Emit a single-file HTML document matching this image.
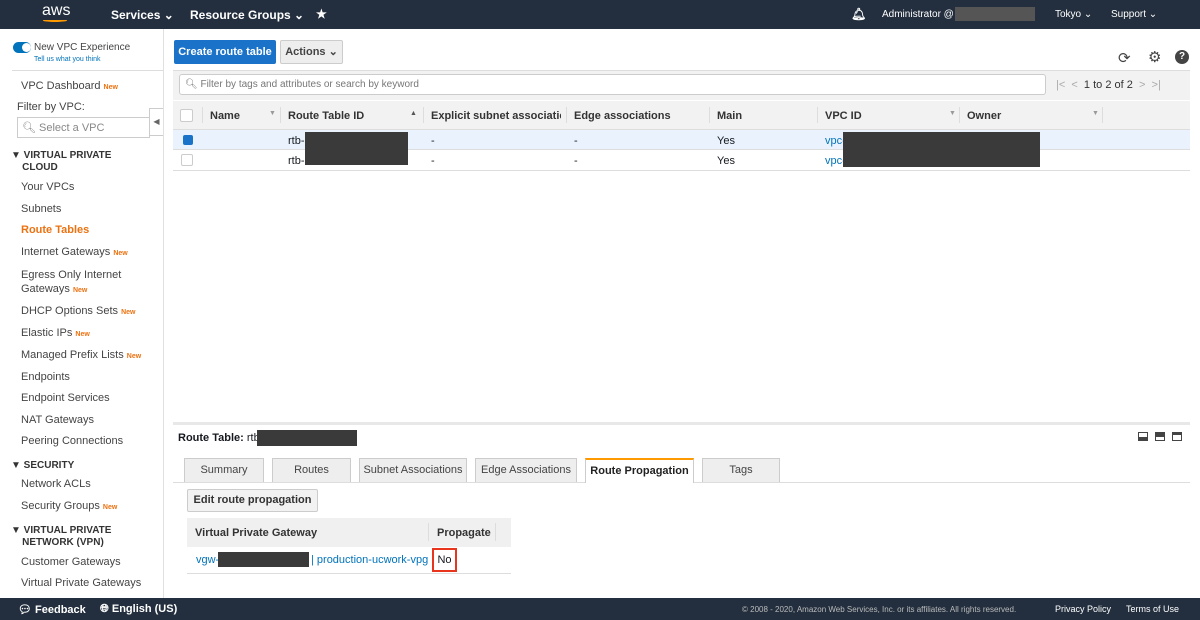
<!DOCTYPE html><html><head><meta charset="utf-8"><style>
*{box-sizing:border-box;margin:0;padding:0}
body{width:1200px;height:620px;overflow:hidden;font-family:"Liberation Sans",Arial,sans-serif;font-size:11px;color:#16191f;background:#fff;position:relative}
.a{position:absolute;white-space:nowrap}
.nav{left:0;top:0;width:1200px;height:29px;background:#232f3e;color:#fff;font-size:12px;font-weight:bold}
.foot{left:0;top:598px;width:1200px;height:22px;background:#232f3e;color:#fff;font-size:11px}
.new{color:#ec7211;font-size:7px;font-weight:bold}
.side{font-size:11px;color:#444}
.blk{background:#3a3a3a}
.hd{font-weight:bold;color:#333}
.sep{top:107px;width:1px;height:16px;background:#ddd}
.tab{top:458px;height:24px;border:1px solid #ccc;border-bottom:none;background:#eee;text-align:center;line-height:23px;font-size:11px;color:#444}
.lnk{color:#0073bb}
</style></head><body>
<div class="a nav">
<div class="a" style="left:42px;top:2px;font-size:16px;font-weight:normal">aws</div>
<div class="a" style="left:43px;top:19px;width:24px;height:3px;border-bottom:2px solid #f90;border-radius:0 0 50% 50%"></div>
<div class="a" style="left:111px;top:8px">Services ⌄</div>
<div class="a" style="left:190px;top:8px">Resource Groups ⌄</div>
<div class="a" style="left:316px;top:7px">★</div>
<div class="a" style="left:851px;top:7px">🔔︎</div>
<div class="a" style="left:882px;top:9px;font-weight:normal;font-size:10px">Administrator @</div>
<div class="a blk" style="left:955px;top:7px;width:80px;height:14px;background:#555"></div>
<div class="a" style="left:1055px;top:9px;font-weight:normal;font-size:10px">Tokyo ⌄</div>
<div class="a" style="left:1111px;top:9px;font-weight:normal;font-size:10px">Support ⌄</div>
</div>
<div class="a" style="left:163px;top:29px;width:1px;height:569px;background:#e0e0e0"></div>
<div class="a" style="left:13px;top:42px;width:18px;height:11px;border-radius:6px;background:#0073bb"></div>
<div class="a" style="left:22px;top:43px;width:9px;height:9px;border-radius:50%;background:#fff"></div>
<div class="a side" style="left:34px;top:42px;font-size:10px">New VPC Experience</div>
<div class="a lnk" style="left:34px;top:56px;font-size:7px">Tell us what you think</div>
<div class="a" style="left:12px;top:70px;width:151px;height:1px;background:#ddd"></div>
<div class="a side" style="left:21px;top:80px">VPC Dashboard <span class="new">New</span></div>
<div class="a side" style="left:17px;top:101px">Filter by VPC:</div>
<div class="a" style="left:17px;top:117px;width:133px;height:21px;border:1px solid #ccc"></div>
<div class="a side" style="left:22px;top:121px;color:#888">🔍︎ Select a VPC</div>
<div class="a" style="left:149px;top:108px;width:14px;height:28px;border:1px solid #ccc;border-right:none;background:#fff;color:#666;font-size:8px;line-height:26px;text-align:center">◀</div>
<div class="a side hd" style="left:11px;top:150px;font-size:10px;line-height:12px">▼ VIRTUAL PRIVATE<br>&nbsp;&nbsp;&nbsp;&nbsp;CLOUD</div>
<div class="a side" style="left:21px;top:181px">Your VPCs</div>
<div class="a side" style="left:21px;top:203px">Subnets</div>
<div class="a side" style="left:21px;top:224px;color:#ec7211;font-weight:bold">Route Tables</div>
<div class="a side" style="left:21px;top:246px">Internet Gateways <span class="new">New</span></div>
<div class="a side" style="left:21px;top:268px;line-height:14px">Egress Only Internet<br>Gateways <span class="new">New</span></div>
<div class="a side" style="left:21px;top:305px">DHCP Options Sets <span class="new">New</span></div>
<div class="a side" style="left:21px;top:327px">Elastic IPs <span class="new">New</span></div>
<div class="a side" style="left:21px;top:349px">Managed Prefix Lists <span class="new">New</span></div>
<div class="a side" style="left:21px;top:371px">Endpoints</div>
<div class="a side" style="left:21px;top:392px">Endpoint Services</div>
<div class="a side" style="left:21px;top:414px">NAT Gateways</div>
<div class="a side" style="left:21px;top:435px">Peering Connections</div>
<div class="a side hd" style="left:11px;top:460px;font-size:10px">▼ SECURITY</div>
<div class="a side" style="left:21px;top:478px">Network ACLs</div>
<div class="a side" style="left:21px;top:500px">Security Groups <span class="new">New</span></div>
<div class="a side hd" style="left:11px;top:525px;font-size:10px;line-height:12px">▼ VIRTUAL PRIVATE<br>&nbsp;&nbsp;&nbsp;&nbsp;NETWORK (VPN)</div>
<div class="a side" style="left:21px;top:556px">Customer Gateways</div>
<div class="a side" style="left:21px;top:577px">Virtual Private Gateways</div>
<div class="a" style="left:174px;top:40px;width:102px;height:24px;background:#1a73c9;border-radius:2px;color:#fff;font-weight:bold;line-height:24px;text-align:center">Create route table</div>
<div class="a" style="left:280px;top:40px;width:63px;height:24px;background:#eee;border:1px solid #ccc;border-radius:2px;font-weight:bold;line-height:22px;text-align:center;color:#444">Actions ⌄</div>
<div class="a" style="left:1118px;top:49px;font-size:15px;color:#444">⟳</div>
<div class="a" style="left:1148px;top:48px;font-size:15px;color:#444">⚙</div>
<div class="a" style="left:1175px;top:50px;width:14px;height:14px;border-radius:50%;background:#444;color:#fff;font-size:10px;font-weight:bold;text-align:center;line-height:14px">?</div>
<div class="a" style="left:173px;top:70px;width:1017px;height:30px;background:#f2f2f2;border-top:1px solid #ddd"></div>
<div class="a" style="left:179px;top:74px;width:867px;height:21px;background:#fff;border:1px solid #ccc;border-radius:3px"></div>
<div class="a" style="left:185px;top:79px;color:#777;font-size:10px">🔍︎ Filter by tags and attributes or search by keyword</div>
<div class="a" style="left:1056px;top:79px;color:#aaa;font-size:11px">|&lt; &nbsp;&lt; <span style="color:#333">&nbsp;1 to 2 of 2&nbsp;</span> &gt; &nbsp;&gt;|</div>
<div class="a" style="left:173px;top:101px;width:1017px;height:29px;background:#f2f2f2;border-bottom:1px solid #ddd"></div>
<div class="a" style="left:180px;top:109px;width:13px;height:13px;border:1px solid #ccc;background:#fff;border-radius:2px"></div>
<div class="a sep" style="left:202px"></div><div class="a sep" style="left:280px"></div><div class="a sep" style="left:423px"></div><div class="a sep" style="left:566px"></div><div class="a sep" style="left:709px"></div><div class="a sep" style="left:817px"></div><div class="a sep" style="left:959px"></div><div class="a sep" style="left:1102px"></div>
<div class="a hd" style="left:210px;top:110px">Name</div><div class="a" style="left:269px;top:110px;color:#999;font-size:7px">▼</div>
<div class="a hd" style="left:288px;top:110px">Route Table ID</div><div class="a" style="left:410px;top:110px;color:#555;font-size:7px">▲</div>
<div class="a hd" style="left:431px;top:110px;width:130px;overflow:hidden">Explicit subnet association</div>
<div class="a hd" style="left:574px;top:110px">Edge associations</div>
<div class="a hd" style="left:717px;top:110px">Main</div>
<div class="a hd" style="left:825px;top:110px">VPC ID</div><div class="a" style="left:949px;top:110px;color:#999;font-size:7px">▼</div>
<div class="a hd" style="left:967px;top:110px">Owner</div><div class="a" style="left:1092px;top:110px;color:#999;font-size:7px">▼</div>
<div class="a" style="left:173px;top:130px;width:1017px;height:20px;background:#eaf3fd;border-bottom:1px solid #ddd"></div>
<div class="a" style="left:183px;top:135px;width:10px;height:10px;background:#1a73c9;border-radius:2px"></div>
<div class="a" style="left:173px;top:170px;width:1017px;height:1px;background:#ddd"></div>
<div class="a" style="left:181px;top:154px;width:12px;height:12px;border:1px solid #ccc;border-radius:2px"></div>
<div class="a" style="left:288px;top:135px">rtb-</div><div class="a" style="left:288px;top:155px">rtb-</div>
<div class="a blk" style="left:305px;top:132px;width:103px;height:33px"></div>
<div class="a" style="left:431px;top:135px">-</div><div class="a" style="left:431px;top:155px">-</div>
<div class="a" style="left:574px;top:135px">-</div><div class="a" style="left:574px;top:155px">-</div>
<div class="a" style="left:717px;top:135px">Yes</div><div class="a" style="left:717px;top:155px">Yes</div>
<div class="a lnk" style="left:825px;top:135px">vpc-</div><div class="a lnk" style="left:825px;top:155px">vpc-</div>
<div class="a blk" style="left:843px;top:132px;width:197px;height:35px"></div>
<div class="a" style="left:173px;top:422px;width:1017px;height:3px;background:#e8e8e8"></div>
<div class="a" style="left:178px;top:432px;font-size:11px"><b>Route Table:</b> rtb-</div>
<div class="a blk" style="left:257px;top:430px;width:100px;height:16px"></div>
<div class="a" style="left:1138px;top:432px;width:10px;height:9px;border:1px solid #444;border-bottom-width:4px"></div>
<div class="a" style="left:1155px;top:432px;width:10px;height:9px;border:1px solid #444;border-top-width:5px"></div>
<div class="a" style="left:1172px;top:432px;width:10px;height:9px;border:1px solid #444;border-top-width:3px"></div>
<div class="a" style="left:173px;top:482px;width:1017px;height:1px;background:#ddd"></div>
<div class="a tab" style="left:184px;width:80px">Summary</div>
<div class="a tab" style="left:272px;width:79px">Routes</div>
<div class="a tab" style="left:359px;width:108px">Subnet Associations</div>
<div class="a tab" style="left:475px;width:102px">Edge Associations</div>
<div class="a tab" style="left:585px;width:109px;background:#fff;border-top:2px solid #f90;font-weight:bold;color:#222;height:25px">Route Propagation</div>
<div class="a tab" style="left:702px;width:78px">Tags</div>
<div class="a" style="left:187px;top:489px;width:131px;height:23px;background:#f2f2f2;border:1px solid #ccc;border-radius:2px;font-weight:bold;text-align:center;line-height:21px;color:#333">Edit route propagation</div>
<div class="a" style="left:187px;top:518px;width:324px;height:29px;background:#f0f0f0"></div>
<div class="a" style="left:428px;top:523px;width:1px;height:18px;background:#ddd"></div>
<div class="a" style="left:495px;top:523px;width:1px;height:18px;background:#ddd"></div>
<div class="a hd" style="left:195px;top:527px">Virtual Private Gateway</div>
<div class="a hd" style="left:437px;top:527px">Propagate</div>
<div class="a" style="left:187px;top:573px;width:324px;height:1px;background:#ddd"></div>
<div class="a lnk" style="left:196px;top:554px">vgw-</div>
<div class="a blk" style="left:218px;top:552px;width:91px;height:15px"></div>
<div class="a lnk" style="left:311px;top:554px">| production-ucwork-vpg</div>
<div class="a" style="left:432px;top:548px;width:25px;height:24px;border:2px solid #e8361e;text-align:center;line-height:20px">No</div>
<div class="a foot">
<div class="a" style="left:18px;top:5px;font-weight:bold">💬︎ Feedback</div>
<div class="a" style="left:100px;top:5px;font-weight:bold">🌐︎ English (US)</div>
<div class="a" style="left:742px;top:7px;font-size:8px;color:#bbb">© 2008 - 2020, Amazon Web Services, Inc. or its affiliates. All rights reserved.</div>
<div class="a" style="left:1055px;top:6px;font-size:9px">Privacy Policy</div>
<div class="a" style="left:1126px;top:6px;font-size:9px">Terms of Use</div>
</div>
</body></html>
